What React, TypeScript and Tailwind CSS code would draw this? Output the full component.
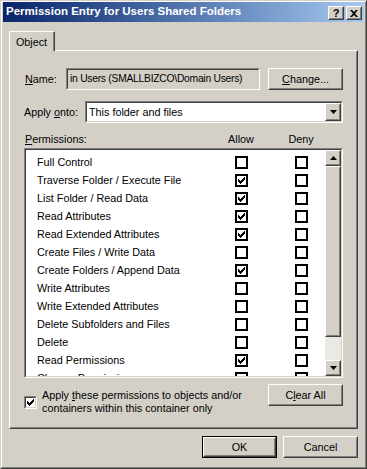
import clsx from "clsx";
import type { ReactNode } from "react";

const FACE = "bg-[#d4d0c8]";

function Raised({
  className,
  innerClassName,
  children,
}: {
  className?: string;
  innerClassName?: string;
  children?: ReactNode;
}) {
  return (
    <div
      className={clsx(
        "border border-t-white border-l-white border-r-[#404040] border-b-[#404040]",
        className
      )}
    >
      <div
        className={clsx(
          "h-full w-full border border-t-[#d4d0c8] border-l-[#d4d0c8] border-r-[#808080] border-b-[#808080]",
          innerClassName
        )}
      >
        {children}
      </div>
    </div>
  );
}

function Sunken({
  className,
  innerClassName,
  children,
}: {
  className?: string;
  innerClassName?: string;
  children?: ReactNode;
}) {
  return (
    <div
      className={clsx(
        "border border-t-[#808080] border-l-[#808080] border-r-white border-b-white",
        className
      )}
    >
      <div
        className={clsx(
          "h-full w-full border border-t-[#404040] border-l-[#404040] border-r-[#d4d0c8] border-b-[#d4d0c8]",
          innerClassName
        )}
      >
        {children}
      </div>
    </div>
  );
}

function Check() {
  return (
    <svg width="7" height="7" viewBox="0 0 7 7" className="block">
      <path d="M0 2h1v1h1v1h1V3h1V2h1V1h1V0h1v3H6v1H5v1H4v1H3v1H2V6H1V5H0z" fill="#000" />
    </svg>
  );
}

function ListBox({ checked }: { checked: boolean }) {
  return (
    <div className="w-[13px] h-[13px] border-2 border-black bg-white flex items-center justify-center">
      {checked && <Check />}
    </div>
  );
}

function Arrow({ up }: { up?: boolean }) {
  return (
    <svg width="7" height="4" viewBox="0 0 7 4" className="block">
      <path d={up ? "M3.5 0L7 4H0z" : "M0 0h7L3.5 4z"} fill="#000" />
    </svg>
  );
}

function Button({ children, className }: { children: ReactNode; className?: string }) {
  return (
    <Raised className={clsx("w-[75px] h-[22px]", className)} innerClassName="flex items-center justify-center">
      {children}
    </Raised>
  );
}

const rows: [string, boolean][] = [
  ["Full Control", false],
  ["Traverse Folder / Execute File", true],
  ["List Folder / Read Data", true],
  ["Read Attributes", true],
  ["Read Extended Attributes", true],
  ["Create Files / Write Data", false],
  ["Create Folders / Append Data", true],
  ["Write Attributes", false],
  ["Write Extended Attributes", false],
  ["Delete Subfolders and Files", false],
  ["Delete", false],
  ["Read Permissions", true],
  ["Change Permissions", false],
  ["Take Ownership", false],
];

export default function App() {
  return (
    <div
      className={clsx(
        "w-[367px] h-[469px] border border-t-[#d4d0c8] border-l-[#d4d0c8] border-r-[#404040] border-b-[#404040] text-[10.8px] text-black font-['Liberation_Sans',Arial,sans-serif]",
        FACE
      )}
    >
      <div className="h-full w-full border border-t-white border-l-white border-r-[#808080] border-b-[#808080] px-px pb-px flex flex-col">
        {/* title bar */}
        <div className="h-[20px] shrink-0 flex items-start bg-linear-to-r from-[#0a246a] to-[#a6caf0]">
          <div className="flex-1 h-full flex items-center pl-[3px] text-white font-bold text-[11.5px] whitespace-nowrap">
            Permission Entry for Users Shared Folders
          </div>
          <div className="flex gap-[2px] mt-[4px] mr-[2px]">
            <Raised className={clsx("w-[16px] h-[14px]", FACE)} innerClassName="flex items-center justify-center">
              <span className="font-bold text-[11px] leading-none">?</span>
            </Raised>
            <Raised className={clsx("w-[16px] h-[14px]", FACE)} innerClassName="flex items-center justify-center">
              <svg width="8" height="7" viewBox="0 0 8 7" className="block">
                <path d="M0 0h2l2 2 2-2h2L5 3.5 8 7H6L4 5 2 7H0l3-3.5z" fill="#000" />
              </svg>
            </Raised>
          </div>
        </div>

        {/* tab */}
        <div className="mt-[9px] ml-[6px] w-[46px] h-[20px] -mb-px relative z-10 bg-[#d4d0c8] border-t border-l border-r border-t-white border-l-white border-r-[#404040] rounded-t-[2px]">
          <div className="h-full border-r border-r-[#808080] flex items-center justify-center pt-px">Object</div>
        </div>

        {/* tab panel */}
        <Raised className="ml-[6px] w-[349px] h-[379px] shrink-0" innerClassName="pt-[16px] px-[13px] flex flex-col">
          <div className="flex h-[22px] items-center">
            <div className="w-[42px] pl-px">
              <span className="underline">N</span>ame:
            </div>
            <Sunken
              className="w-[194px] h-[22px]"
              innerClassName="flex items-center pl-[2px] overflow-hidden whitespace-nowrap text-[10.3px] tracking-[-0.25px]"
            >
              in Users (SMALLBIZCO\Domain Users)
            </Sunken>
            <Button className="ml-auto">
              <span>
                <span className="underline">C</span>hange...
              </span>
            </Button>
          </div>

          <div className="flex h-[22px] items-center mt-[11px]">
            <div className="w-[61px]">
              Apply <span className="underline">o</span>nto:
            </div>
            <Sunken className="flex-1 h-[22px]" innerClassName="bg-white flex items-center">
              <div className="flex-1 pl-[2px]">This folder and files</div>
              <Raised className={clsx("w-[16px] h-[18px]", FACE)} innerClassName="flex items-center justify-center">
                <Arrow />
              </Raised>
            </Sunken>
          </div>

          <div className="flex h-[14px] items-center mt-[9px]">
            <div className="w-[204px] pl-px">
              <span className="underline">P</span>ermissions:
            </div>
            <div className="w-[26px] text-center">Allow</div>
            <div className="w-[34px]" />
            <div className="w-[26px] text-center">Deny</div>
          </div>

          <Sunken className="mt-[2px] h-[230px]" innerClassName="bg-white flex overflow-hidden">
            <div className="flex-1 pt-[3px] overflow-hidden">
              {rows.map(([label, allow]) => (
                <div key={label} className="flex h-[18px] items-center">
                  <div className="w-[202px] pl-[11px] whitespace-nowrap">{label}</div>
                  <div className="w-[26px] flex justify-center">
                    <ListBox checked={allow} />
                  </div>
                  <div className="w-[34px]" />
                  <div className="w-[26px] flex justify-center">
                    <ListBox checked={false} />
                  </div>
                </div>
              ))}
            </div>
            <div className="w-[16px] h-full flex flex-col bg-[#ebe9e5]">
              <Raised className={clsx("h-[16px] shrink-0", FACE)} innerClassName="flex items-center justify-center">
                <Arrow up />
              </Raised>
              <Raised className={clsx("h-[171px] shrink-0", FACE)} />
              <div className="flex-1" />
              <Raised className={clsx("h-[16px] shrink-0", FACE)} innerClassName="flex items-center justify-center">
                <Arrow />
              </Raised>
            </div>
          </Sunken>

          <div className="flex items-start mt-[6px]">
            <div className="flex items-center mt-[5px] gap-[5px]">
              <Sunken className="w-[13px] h-[13px]" innerClassName="bg-white flex items-center justify-center">
                <Check />
              </Sunken>
              <div className="leading-[13px] whitespace-nowrap">
                Apply <span className="underline">t</span>hese permissions to objects and/or
                <br />
                containers within this container only
              </div>
            </div>
            <Button className="ml-auto">
              <span>
                C<span className="underline">l</span>ear All
              </span>
            </Button>
          </div>
        </Raised>

        {/* bottom buttons */}
        <div className="mt-[7px] flex justify-end gap-[6px] pr-[6px]">
          <div className="w-[75px] h-[22px] border border-black">
            <Raised className="w-full h-full" innerClassName="flex items-center justify-center">
              OK
            </Raised>
          </div>
          <Button>Cancel</Button>
        </div>
      </div>
    </div>
  );
}
